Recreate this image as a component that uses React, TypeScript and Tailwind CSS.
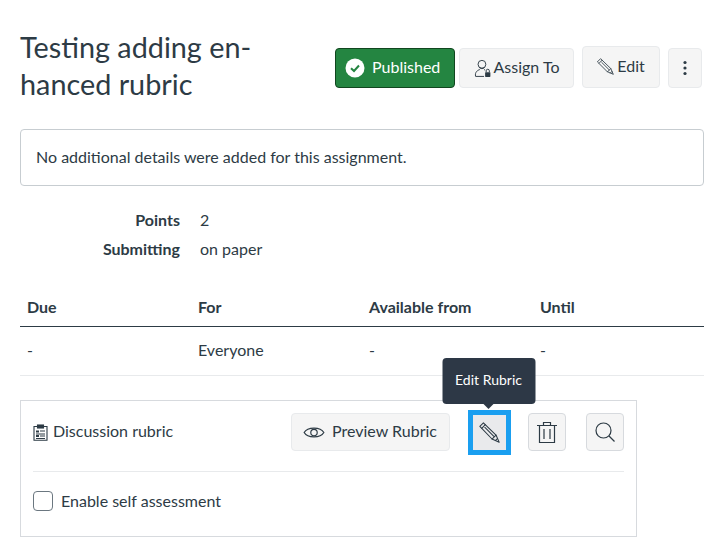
import React from "react";

const Pencil = ({ s = 20, c = "#2D3B45" }: { s?: number; c?: string }) => (
  <svg width={s} height={s} viewBox="0 0 20 20" fill="none" stroke={c} strokeWidth="1" strokeLinejoin="round" strokeLinecap="round">
    <path d="M0.8 4.2 L4.2 0.8 L16.2 12.4 L19.2 19.2 L12.4 16.2 Z" />
    <path d="M2.6 6 L6 2.6 M5.6 5.2 L14.4 14 M16.2 12.4 L12.4 16.2 M17.6 15.8 L15.8 17.6" />
  </svg>
);

const Btn = ({ className = "", children }: { className?: string; children: React.ReactNode }) => (
  <div className={"flex items-center justify-center rounded-[4px] border border-[#e8eaec] bg-[#f5f5f5] text-[#2d3b45] text-[16px] " + className}>
    {children}
  </div>
);

const IconBtn = ({ children }: { children: React.ReactNode }) => (
  <div className="flex h-[38px] w-[38px] items-center justify-center rounded-[4px] border border-[#d7dade] bg-[#f5f5f5]">{children}</div>
);

export default function App() {
  return (
    <div className="h-[548px] w-[721px] overflow-hidden bg-white pl-5 pr-[17px] pt-[29px] text-[16px] text-[#2d3b45]" style={{ fontFamily: "Lato, sans-serif" }}>
      <div className="flex items-start justify-between">
        <h1 className="w-[300px] text-[28.8px] font-normal leading-[37px]">Testing adding en-<br />hanced rubric</h1>
        <div className="mr-[2px] mt-[19px] flex items-center">
          <div className="flex h-[40px] w-[120px] items-center gap-[7px] rounded-[4px] border border-[#11461f] bg-[#248541] pb-0.5 pl-[9px] text-white">
            <svg width="20" height="20" viewBox="0 0 20 20" className="mt-0.5">
              <circle cx="10" cy="10" r="9.5" fill="#fff" />
              <path d="M6 10.2 L9 13 L14 7.5" fill="none" stroke="#248541" strokeWidth="2" />
            </svg>
            <span>Published</span>
          </div>
          <Btn className="ml-1 h-[40px] w-[115px] gap-[2px] pb-0.5">
            <svg width="18" height="19" viewBox="0 0 16 18" fill="none" stroke="#2D3B45" strokeWidth="0.9" className="mt-0.5">
              <circle cx="7" cy="5" r="3.7" />
              <path d="M4.5 8 C5 9.5 9 9.5 9.5 8 M1 16.5 C0 12.5 3 10.5 5 10 M9 10 L10 10.5 M1 16.5 H9" />
              <rect x="10" y="12.5" width="5" height="4.5" rx="0.6" fill="#2D3B45" stroke="none" />
              <path d="M11 12.5 V11.2 A1.5 1.5 0 0 1 14 11.2 V12.5" />
            </svg>
            <span>Assign To</span>
          </Btn>
          <Btn className="ml-2 h-[42px] w-[78px] gap-[3px] pb-0.5 -mt-0.5">
            <Pencil s={17} />
            <span>Edit</span>
          </Btn>
          <Btn className="ml-2 h-[40px] w-[34px]">
            <svg width="4" height="16" viewBox="0 0 4 16" fill="#2D3B45">
              <circle cx="2" cy="2.5" r="1.6" />
              <circle cx="2" cy="8" r="1.6" />
              <circle cx="2" cy="13.5" r="1.6" />
            </svg>
          </Btn>
        </div>
      </div>

      <div className="mt-[26px] flex h-[57px] items-center rounded-[4px] border border-[#c7cdd1] pb-0.5 pl-[15px]">No additional details were added for this assignment.</div>

      <div className="mt-[19px] grid grid-cols-[160px_1fr] gap-x-5 leading-[29px]">
        <div className="text-right font-bold">Points</div>
        <div>2</div>
        <div className="text-right font-bold">Submitting</div>
        <div>on paper</div>
      </div>

      <div className="mt-[34px] grid grid-cols-[171px_171px_171px_1fr] border-b border-[#2d3b45] pb-[9px] pl-[7px] font-bold leading-[20px]">
        <div>Due</div>
        <div>For</div>
        <div>Available from</div>
        <div>Until</div>
      </div>
      <div className="grid h-[49px] grid-cols-[171px_171px_171px_1fr] items-center border-b border-[#e8eaec] pb-0.5 pl-[7px]">
        <div>-</div>
        <div>Everyone</div>
        <div>-</div>
        <div>-</div>
      </div>

      <div className="mt-[24px] h-[137px] w-[617px] border border-[#d7dade] px-3 pt-3">
        <div className="flex h-[59px] items-start border-b border-[#e8eaec]">
          <div className="flex h-[38px] w-[258px] items-center gap-[5px] pb-0.5">
            <svg width="15" height="17" viewBox="0 0 15 17" fill="none" stroke="#2D3B45" strokeWidth="1.1" className="mt-[3px]">
              <path d="M4.5 2.5 H1 V16.3 H14 V2.5 H10.5" />
              <rect x="4.5" y="1" width="6" height="3" fill="#2D3B45" />
              <rect x="3" y="6.5" width="3" height="2" fill="#2D3B45" stroke="none" />
              <rect x="3" y="11" width="3" height="2" fill="#2D3B45" stroke="none" />
              <path d="M7 7 H12 M3 10 H12 M7 12 H12 M3 14.5 H12" />
            </svg>
            <span>Discussion rubric</span>
          </div>
          <Btn className="h-[38px] w-[159px] gap-[7px] border-[#d7dade] pb-0.5 pr-[1px]">
            <svg width="22" height="15" viewBox="0 0 20 14" fill="none" stroke="#2D3B45" strokeWidth="1.1" className="mt-0.5">
              <path d="M0.8 7 C4 1.5 16 1.5 19.2 7 C16 12.5 4 12.5 0.8 7 Z" />
              <circle cx="10" cy="7" r="3" />
            </svg>
            <span>Preview Rubric</span>
          </Btn>
          <div className="relative ml-[18px] flex h-[45px] w-[43px] -mt-[3px] items-center justify-center border-[5px] border-[#1a9ff0] bg-[#e9eaec]">
            <Pencil s={21} />
            <div className="absolute bottom-[46px] left-[calc(50%-1px)] flex h-[46px] w-[93px] -translate-x-1/2 items-center justify-center rounded-[4px] bg-[#2d3846] pb-1 text-[14px] text-white">
              Edit Rubric
              <div className="absolute -bottom-[5px] left-1/2 h-0 w-0 -translate-x-1/2 border-x-[6px] border-t-[6px] border-x-transparent border-t-[#2d3846]" />
            </div>
          </div>
          <div className="ml-[17px]">
            <IconBtn>
              <svg width="22" height="23" viewBox="0 0 22 23" fill="none" stroke="#2D3B45" strokeWidth="1.2">
                <path d="M1 4.5 H21 M7.5 4.5 V1.5 H14.5 V4.5 M3.5 4.5 V21.5 H18.5 V4.5 M8 8 V18 M14 8 V18" />
              </svg>
            </IconBtn>
          </div>
          <div className="ml-5">
            <IconBtn>
              <svg width="20" height="20" viewBox="0 0 20 20" fill="none" stroke="#2D3B45" strokeWidth="1.2">
                <circle cx="8.5" cy="8.5" r="7.5" />
                <path d="M14 14 L19.5 19.5" />
              </svg>
            </IconBtn>
          </div>
        </div>
        <div className="mt-[17px] flex items-center gap-[8px]">
          <div className="h-[20px] w-[20px] rounded-[4px] border border-[#6b7780] bg-white" />
          <span>Enable self assessment</span>
        </div>
      </div>
    </div>
  );
}
